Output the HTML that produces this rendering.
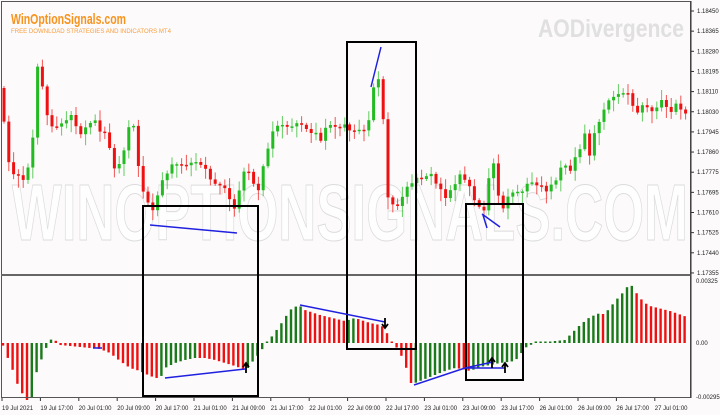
<!DOCTYPE html>
<html><head><meta charset="utf-8"><style>
html,body{margin:0;padding:0;background:#fcfafa;}
svg{display:block;font-family:"Liberation Sans",sans-serif;}
</style></head><body>
<svg id="s" width="720" height="415" viewBox="0 0 720 415" xmlns="http://www.w3.org/2000/svg">
<rect x="0" y="0" width="720" height="415" fill="#fcfafa"/>
<text x="12" y="240" font-size="80" font-weight="bold" fill="#fefefe" stroke="#dcdcdc" stroke-width="1" textLength="676" lengthAdjust="spacingAndGlyphs">WINOPTIONSIGNALS.COM</text>
<text x="538" y="37" font-size="25" font-weight="bold" fill="#e0e0e0" textLength="146" lengthAdjust="spacingAndGlyphs">AODivergence</text>
<text x="11" y="24" font-size="15" font-weight="bold" fill="#f7931e" textLength="115" lengthAdjust="spacingAndGlyphs">WinOptionSignals.com</text>
<text x="11" y="33" font-size="6" fill="#f7a040" textLength="160" lengthAdjust="spacingAndGlyphs">FREE DOWNLOAD STRATEGIES AND INDICATORS MT4</text>
<g id="c"></g>
<g id="h"></g>
<rect x="1.5" y="1.5" width="689" height="396" fill="none" stroke="#555" stroke-width="1"/>
<line x1="1" y1="275" x2="691" y2="275" stroke="#666" stroke-width="2"/>
<g fill="none" stroke="#000" stroke-width="2">
<rect x="143" y="206" width="115" height="190"/>
<rect x="347" y="42" width="69" height="307"/>
<rect x="466" y="204" width="57" height="176"/>
</g>
<g stroke="#2020e0" stroke-width="1.5" fill="none">
<line x1="150" y1="225" x2="237" y2="233"/>
<line x1="371" y1="87" x2="381" y2="47"/>
<line x1="482" y1="214" x2="500" y2="227"/>
<line x1="483" y1="215" x2="487" y2="228"/>
<line x1="165" y1="378" x2="245" y2="369"/>
<line x1="300" y1="305" x2="385" y2="322"/>
<line x1="414" y1="385" x2="465" y2="368"/>
<line x1="465" y1="368" x2="493" y2="362"/>
<line x1="465" y1="368" x2="505" y2="368"/>
<line x1="93" y1="348" x2="102" y2="348"/>
</g>
<g stroke="#000" stroke-width="1.8" fill="none">
<path d="M246 373 V364 M243 367 L246 363 L249 367"/>
<path d="M385 318 V327 M382 324 L385 328 L388 324"/>
<path d="M492 368 V359 M489 362 L492 358 L495 362"/>
<path d="M505 373 V364 M502 367 L505 363 L508 367"/>
</g>
<g font-size="6" fill="#222" id="ax"></g>
<line x1="691" y1="1" x2="691" y2="398" stroke="#333"/>
</svg>
<script>
(function(){
var NS="http://www.w3.org/2000/svg";
function el(p,t,a){var e=document.createElementNS(NS,t);for(var k in a)e.setAttribute(k,a[k]);p.appendChild(e);return e;}
var A=[[3,115],[8,160],[12,175],[17,170],[22,180],[26,185],[30,150],[34,130],[37,68],[41,75],[45,110],[50,120],[55,130],[60,125],[65,120],[70,115],[75,125],[80,135],[85,125],[90,125],[95,120],[100,130],[105,135],[110,150],[115,170],[120,160],[125,150],[130,120],[133,118],[137,160],[142,190],[147,200],[150,205],[155,210],[160,185],[165,175],[170,168],[175,165],[180,165],[185,162],[190,165],[195,162],[200,162],[205,170],[210,180],[215,183],[220,183],[225,190],[230,200],[235,208],[240,190],[245,168],[250,172],[255,185],[260,195],[265,150],[270,145],[275,125],[280,128],[285,120],[290,130],[295,125],[300,120],[305,130],[310,135],[315,130],[320,140],[325,130],[330,125],[335,125],[340,130],[345,125],[350,130],[355,128],[360,132],[365,130],[370,115],[375,80],[380,80],[385,140],[388,195],[392,205],[396,210],[400,200],[405,190],[410,188],[415,178],[420,175],[425,180],[430,172],[435,180],[440,190],[445,200],[450,190],[455,182],[460,176],[465,180],[470,185],[475,205],[480,208],[485,210],[490,165],[495,165],[500,210],[505,205],[510,195],[515,192],[520,190],[525,188],[530,182],[535,183],[540,185],[545,195],[550,185],[555,180],[560,170],[565,165],[570,170],[575,160],[580,150],[585,132],[590,155],[595,132],[600,120],[605,105],[610,102],[615,96],[620,92],[625,90],[630,98],[635,112],[640,110],[645,105],[650,112],[655,108],[660,100],[665,105],[670,112],[675,105],[680,110],[685,112],[690,118]];
function interp(P,x){for(var i=0;i<P.length-1;i++){if(x<=P[i+1][0]){var t=(x-P[i][0])/(P[i+1][0]-P[i][0]);return P[i][1]+t*(P[i+1][1]-P[i][1]);}}return P[P.length-1][1];}
var g=document.getElementById('c');var prev=interp(A,0);
for(var i=0;i<143;i++){var x=4+i*4.8;var c=interp(A,x)+((i*37)%7-3)*0.8;var o=prev;prev=c;
var col=c<o?"#22bb22":"#ee1111";var tp=Math.min(o,c),bt=Math.max(o,c);if(bt-tp<1.5)bt=tp+1.5;
var hw=((i*13)%9)+2,lw=((i*7)%11)+2;
el(g,'line',{x1:x,y1:tp-hw,x2:x,y2:bt+lw,stroke:col,'stroke-width':1,opacity:0.7});
el(g,'rect',{x:x-1.5,y:tp,width:3,height:bt-tp,fill:col});}
var H=[[2,0],[7,-13],[12,-25],[17,-40],[22,-50],[27,-57],[32,-54],[37,-27],[42,-15],[47,-3],[52,5],[55,3],[60,-2],[70,-3],[80,-4],[90,-5],[100,-6],[110,-10],[120,-18],[130,-25],[140,-28],[150,-33],[160,-36],[165,-25],[175,-20],[185,-17],[195,-15],[205,-15],[215,-17],[225,-20],[235,-23],[243,-26],[248,-25],[253,-18],[258,-12],[263,-5],[268,2],[273,8],[278,15],[283,22],[288,30],[293,36],[300,37],[305,33],[320,28],[345,22],[355,25],[370,20],[380,18],[385,15],[390,2],[395,-2],[400,-10],[405,-20],[410,-40],[415,-40],[425,-36],[435,-32],[445,-28],[455,-25],[462,-26],[470,-28],[480,-24],[500,-20],[515,-18],[520,-12],[525,-5],[530,-2],[540,0],[555,2],[565,3],[570,8],[575,13],[580,18],[585,22],[590,26],[600,30],[605,30],[610,35],[615,42],[620,47],[625,53],[630,60],[635,52],[640,45],[645,40],[650,37],[670,32],[690,25]];
var gh=document.getElementById('h');var pv=0;
for(var i=0;i<143;i++){var x=3+i*4.8;var v=interp(H,x);if(x>=600&&x<606)v=29;var col=v>pv?"#1a7a1a":"#ee1111";pv=v;
var y0=343,y1=343-v;if(Math.abs(v)<1.5)y1=y0-1.5;
el(gh,'rect',{x:x-1.2,y:Math.min(y0,y1),width:2.4,height:Math.abs(y1-y0)||1.5,fill:col});}
var ax=document.getElementById('ax');
var pr=["1.18450","1.18365","1.18280","1.18195","1.18110","1.18030","1.17945","1.17860","1.17775","1.17695","1.17610","1.17525","1.17440","1.17355"];
for(var i=0;i<pr.length;i++){var y=11+i*20.15;el(ax,'line',{x1:691,y1:y,x2:694,y2:y,stroke:'#333'});var t=el(ax,'text',{x:697,y:y+2});t.textContent=pr[i];}
[["0.00325",283],["0.00",345],["-0.002953",399]].forEach(function(a){var t=el(ax,'text',{x:696,y:a[1]});t.textContent=a[0];});
var tl=["19 Jul 2021","19 Jul 17:00","20 Jul 01:00","20 Jul 09:00","20 Jul 17:00","21 Jul 01:00","21 Jul 09:00","21 Jul 17:00","22 Jul 01:00","22 Jul 09:00","22 Jul 17:00","23 Jul 01:00","23 Jul 09:00","23 Jul 17:00","26 Jul 01:00","26 Jul 09:00","26 Jul 17:00","27 Jul 01:00"];
for(var i=0;i<tl.length;i++){var x=2+i*38.4;var t=el(ax,'text',{x:x,y:410});t.textContent=tl[i];el(ax,'line',{x1:x,y1:398,x2:x,y2:401,stroke:'#333'});}
})();
</script>
</body></html>
